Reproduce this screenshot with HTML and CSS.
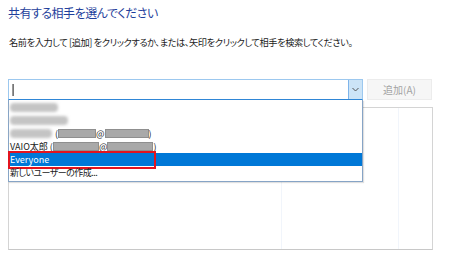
FILE: index.html
```html
<!DOCTYPE html>
<html lang="ja">
<head>
<meta charset="utf-8">
<link rel="stylesheet" href="styles.css">
</head>
<body>
<div class="page">
  <div class="title">共有する相手を選んでください</div>
  <div class="desc">名前を入力して [追加] をクリックするか、または、矢印をクリックして相手を検索してください。</div>
  <div class="controls">
    <div class="combo">
      <div class="combo-field"><span class="caret"></span></div>
      <div class="combo-btn">
        <svg width="7" height="5" viewBox="0 0 7 5"><path d="M0.5 1 L3.5 4 L6.5 1" fill="none" stroke="#555" stroke-width="1"/></svg>
      </div>
      <div class="dropdown">
        <div class="item"><span class="blur w48"></span></div>
        <div class="item"><span class="blur w58"></span></div>
        <div class="item"><span class="blur w42"></span><span class="txt gap">(</span><span class="redact w38"></span><span class="txt">@</span><span class="redact w44"></span><span class="txt">)</span></div>
        <div class="item"><span class="txt">VAIO太郎 (</span><span class="redact w46"></span><span class="txt">@</span><span class="redact w46"></span><span class="txt">)</span></div>
        <div class="item selected"><span class="txt">Everyone</span><span class="redbox"></span></div>
        <div class="item"><span class="txt narrow">新しいユーザーの作成...</span></div>
      </div>
    </div>
    <div class="add-btn">追加(A)</div>
  </div>
  <div class="listbox">
    <div class="col c1"></div>
    <div class="col c2"></div>
    <div class="col c3"></div>
  </div>
</div>
</body>
</html>
```
FILE: styles.css
```css
html, body {
  margin: 0;
  padding: 0;
  background: #ffffff;
}
body {
  width: 450px;
  height: 255px;
  overflow: hidden;
  font-family: "Noto Sans CJK JP", "Noto Sans", sans-serif;
  font-feature-settings: "palt";
  color: #1a1a1a;
}
.page {
  padding: 4px 0 0 8px;
}
.title {
  font-size: 12px;
  letter-spacing: -0.5px;
  line-height: 18px;
  color: #1f3f9c;
  height: 18px;
}
.desc {
  margin-top: 14px;
  margin-left: 1px;
  font-size: 9.2px;
  letter-spacing: -0.4px;
  line-height: 13px;
  color: #1a1a1a;
}
.controls {
  margin-top: 30px;
  display: flex;
  gap: 4px;
  height: 21px;
}
.combo {
  position: relative;
  width: 355px;
  height: 21px;
  box-sizing: border-box;
  border: 1px solid #9cc8ef;
  border-bottom: 1px solid #2f86d6;
  display: flex;
  background: #fff;
}
.combo-field {
  flex: 1;
  display: flex;
  align-items: center;
  padding-left: 3px;
}
.caret {
  width: 1px;
  height: 12px;
  background: #777;
  border-left: 1px solid #999;
}
.combo-btn {
  width: 13px;
  background: #cce4f7;
  border-left: 1px solid #7eb4ea;
  display: flex;
  align-items: center;
  justify-content: center;
}
.dropdown {
  position: absolute;
  left: -1px;
  top: 20px;
  width: 355px;
  box-sizing: border-box;
  border: 1px solid #86a4c6;
  border-top: none;
  background: #fff;
  padding-top: 1px;
  padding-bottom: 2px;
  box-shadow: 1px 1px 1px rgba(0,0,0,0.12);
  z-index: 5;
}
.item {
  position: relative;
  height: 13px;
  display: flex;
  align-items: center;
  padding-left: 1px;
  font-size: 9px;
  line-height: 13px;
  white-space: nowrap;
}
.item.selected {
  background: #0078d7;
  color: #fff;
}
.txt {
  display: inline-block;
}
.narrow {
  letter-spacing: -0.55px;
}
.gap {
  margin-left: 3px;
}
.blur {
  display: inline-block;
  height: 9px;
  background: #c4c4c4;
  border-radius: 4px;
  filter: blur(1.5px);
}
.redact {
  display: inline-block;
  height: 9px;
  background: #a9a9a9;
  border: 1px solid #8f8f8f;
  box-sizing: border-box;
}
.w48 { width: 48px; }
.w58 { width: 58px; }
.w42 { width: 42px; }
.w38 { width: 38px; }
.w44 { width: 44px; }
.w46 { width: 46px; }
.redbox {
  position: absolute;
  left: -1px;
  top: -2px;
  width: 148px;
  height: 18px;
  box-sizing: border-box;
  border: 2px solid #e3141e;
}
.add-btn {
  width: 65px;
  height: 21px;
  box-sizing: border-box;
  background: #f6f6f6;
  border: 1px solid #ececec;
  color: #a3a3a3;
  font-size: 10px;
  display: flex;
  align-items: center;
  justify-content: center;
}
.listbox {
  margin-top: 7px;
  width: 425px;
  height: 143px;
  box-sizing: border-box;
  border: 1px solid #d4d4d4;
  border-bottom-color: #c8c8c8;
  display: flex;
}
.col {
  height: 100%;
}
.c1 {
  width: 272px;
  border-right: 1px solid #f1f5fb;
}
.c2 {
  width: 116px;
  border-right: 1px solid #f1f5fb;
}
.c3 {
  flex: 1;
}
```
